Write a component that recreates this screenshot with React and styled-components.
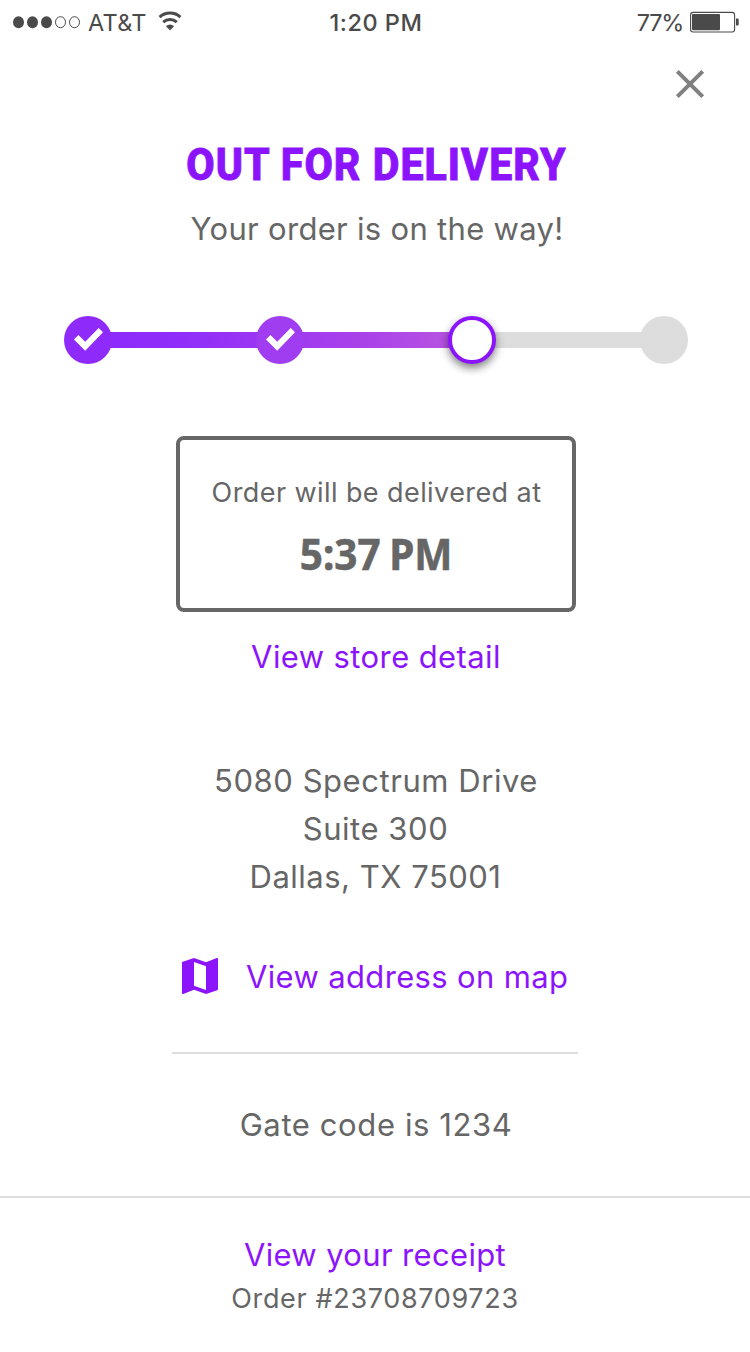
import React from "react";
import styled, { createGlobalStyle } from "styled-components";

const PURPLE = "#8c14fc";
const GREY = "#666666";
const RULE = "#dddddd";

const Global = createGlobalStyle`
  * { box-sizing: border-box; }
  body { margin: 0; background: #fff; }
`;

const Screen = styled.main`
  width: 750px;
  height: 1352px;
  display: flex;
  flex-direction: column;
  align-items: center;
  overflow: hidden;
  background: #fff;
  color: ${GREY};
  font-family: Inter, "Liberation Sans", sans-serif;
`;

const StatusBar = styled.header`
  width: 100%;
  height: 44px;
  padding: 0 10px 0 12px;
  display: grid;
  grid-template-columns: 1fr auto 1fr;
  align-items: center;
  color: #4a4a4a;
`;

const StatusGroup = styled.div`
  display: flex;
  align-items: center;
  justify-content: ${(p) => (p.$end ? "flex-end" : "flex-start")};
`;

const StatusText = styled.span`
  padding-top: 2px;
  font-size: 23.5px;
  line-height: 42px;
  font-weight: ${(p) => p.$weight || 400};
  letter-spacing: ${(p) => p.$ls || 0}px;
  white-space: nowrap;
`;

const Icon = styled.svg`
  display: block;
  flex: none;
  overflow: visible;
  margin: ${(p) => p.$m || 0};
`;

const CloseButton = styled.button`
  align-self: flex-end;
  width: 40px;
  height: 40px;
  margin: 20px 40px 0 0;
  padding: 0;
  border: 0;
  background: none;
`;

const Title = styled.h1`
  margin: 37px 0 0;
  padding-left: 4px;
  color: ${PURPLE};
  font: 800 44.5px/48px Roboto, sans-serif;
  letter-spacing: 1.1px;
  white-space: nowrap;
  transform: scaleX(0.925);
  -webkit-text-stroke: 0.9px currentColor;
`;

const Line = styled.p`
  margin: ${(p) => p.$top || 0}px 0 0;
  padding-left: ${(p) => p.$indent || 0}px;
  font-size: ${(p) => (p.$small ? 27 : 31)}px;
  line-height: ${(p) => (p.$small ? 40 : 48)}px;
  font-weight: 380;
  letter-spacing: ${(p) => p.$ls || 0}px;
  white-space: nowrap;
`;

const Link = styled(Line).attrs({ as: "a" })`
  color: ${PURPLE};
`;

const Steps = styled.div`
  width: 624px;
  height: 48px;
  margin: 63px 0 0 2px;
  display: flex;
  align-items: center;
  justify-content: space-between;
  background:
    linear-gradient(${RULE}, ${RULE}) 408px 16px / 192px 16px no-repeat,
    linear-gradient(90deg, #8c2afc 0, #8f2dfa 90px, #a941ea 270px, #b955e0 375px) 24px 16px / 384px 16px no-repeat;
`;

const Step = styled.span`
  width: 48px;
  height: 48px;
  border-radius: 50%;
  background: ${(p) => p.$bg};
  ${(p) =>
    p.$current &&
    `border: 4px solid ${PURPLE}; box-shadow: 0 4px 8px rgba(0, 0, 0, 0.5);`}
`;

const EtaBox = styled.section`
  width: 400px;
  height: 176px;
  margin: 72px 0 0 2px;
  padding-top: 33px;
  display: flex;
  flex-direction: column;
  align-items: center;
  border: 4px solid ${GREY};
  border-radius: 8px;
`;

const EtaTime = styled.strong`
  margin-top: 16px;
  font: 700 43.5px/48px "Noto Sans", sans-serif;
  word-spacing: -2px;
  white-space: nowrap;
  transform: scaleX(0.93);
  -webkit-text-stroke: 0.6px currentColor;
`;

const Address = styled.address`
  margin-top: 76px;
  display: flex;
  flex-direction: column;
  align-items: center;
  font-style: normal;
`;

const MapRow = styled.div`
  width: 398px;
  height: 48px;
  margin-top: 51px;
  display: flex;
  align-items: center;
  gap: 22px;
`;

const Rule = styled.hr`
  flex: none;
  width: ${(p) => p.$w};
  height: 2px;
  margin: ${(p) => p.$top}px 0 0;
  border: 0;
  background: ${RULE};
`;

const Check = () => (
  <Icon width="48" height="48" viewBox="0 0 48 48">
    <path d="M10 23.5 14.4 19 21.2 25.7 34.7 12 39 16.3 21.2 34.8Z" fill="#fff" />
  </Icon>
);

export default function App() {
  return (
    <Screen>
      <Global />
      <StatusBar>
        <StatusGroup>
          <Icon width="70" height="14" viewBox="0 0 70 14" $m="0 6px 0 0">
            {[0, 1, 2, 3, 4].map((i) => (
              <ellipse
                key={i}
                cx={6.5 + i * 14}
                cy="7.2"
                rx={i < 3 ? 5.5 : 5}
                ry={i < 3 ? 6 : 5.5}
                fill={i < 3 ? "#4a4a4a" : "none"}
                stroke={i < 3 ? "none" : "#4a4a4a"}
              />
            ))}
          </Icon>
          <StatusText $ls={0.3}>AT&amp;T</StatusText>
          <Icon width="24" height="20" viewBox="0 0 24 20" $m="0 0 3px 11px">
            <g fill="none" stroke="#4a4a4a" strokeWidth="3">
              <path d="M1.6 6.2A15.3 15.3 0 0 1 22.4 6.2" />
              <path d="M5.2 11.2A10 10 0 0 1 18.800 11.2" />
            </g>
            <path d="M8 15Q12 12 16 15L15 16.6Q13 18 12 19.6 11 18 9 16.6Z" fill="#4a4a4a" />
          </Icon>
        </StatusGroup>
        <StatusText $weight={480} $ls={0.5}>1:20 PM</StatusText>
        <StatusGroup $end>
          <StatusText $ls={-1.3}>77%</StatusText>
          <Icon width="50" height="22" viewBox="0 0 50 22" $m="0 0 0 7px">
            <rect x="0.6" y="1.4" width="44" height="19.6" rx="2.5" fill="none" stroke="#4a4a4a" strokeWidth="1.1" />
            <rect x="2" y="3" width="28" height="16.2" rx="1" fill="#4a4a4a" />
            <path d="M46 7.5h1.5q1.2 0 1.2 1.2v4.6q0 1.2-1.2 1.2H46z" fill="#4a4a4a" />
          </Icon>
        </StatusGroup>
      </StatusBar>
      <CloseButton aria-label="Close">
        <Icon width="40" height="40" viewBox="0 0 40 40">
          <path d="M7.300 7.300 32.700 32.700M32.700 7.300 7.300 32.700" stroke="#808080" strokeWidth="4" />
        </Icon>
      </CloseButton>
      <Title>OUT FOR DELIVERY</Title>
      <Line $top={16} $ls={0.3} $indent={4}>Your order is on the way!</Line>
      <Steps>
        <Step $bg="#8e2bfb"><Check /></Step>
        <Step $bg="#a03df0"><Check /></Step>
        <Step $bg="#fff" $current />
        <Step $bg={RULE} />
      </Steps>
      <EtaBox>
        <Line $small $ls={0.42} $indent={1}>Order will be delivered at</Line>
        <EtaTime>5:37 PM</EtaTime>
      </EtaBox>
      <Link $top={21} $ls={0.4} $indent={2}>View store detail</Link>
      <Address>
        <Line $ls={0.55} $indent={2}>5080 Spectrum Drive</Line>
        <Line $ls={0.55} $indent={1}>Suite 300</Line>
        <Line $ls={0.5} $indent={1}>Dallas, TX 75001</Line>
      </Address>
      <MapRow>
        <Icon width="48" height="48" viewBox="0 0 24 24">
          <path
            fill={PURPLE}
            d="M20.5 3l-.16.03L15 5.1 9 3 3.36 4.9c-.21.07-.36.25-.36.48V20.5c0 .28.22.5.5.5l.16-.03L9 18.9l6 2.1 5.64-1.9c.21-.07.36-.25.36-.48V3.5c0-.28-.22-.5-.5-.5zM15 19l-6-2.11V5l6 2.11V19z"
          />
        </Icon>
        <Link $top={2} $ls={0.35}>View address on map</Link>
      </MapRow>
      <Rule $w="406px" $top={52} />
      <Line $top={47} $ls={0.6} $indent={2}>Gate code is 1234</Line>
      <Rule $w="100%" $top={47} />
      <Link $top={33} $ls={0.35}>View your receipt</Link>
      <Line $small $ls={0.65}>Order #23708709723</Line>
    </Screen>
  );
}
